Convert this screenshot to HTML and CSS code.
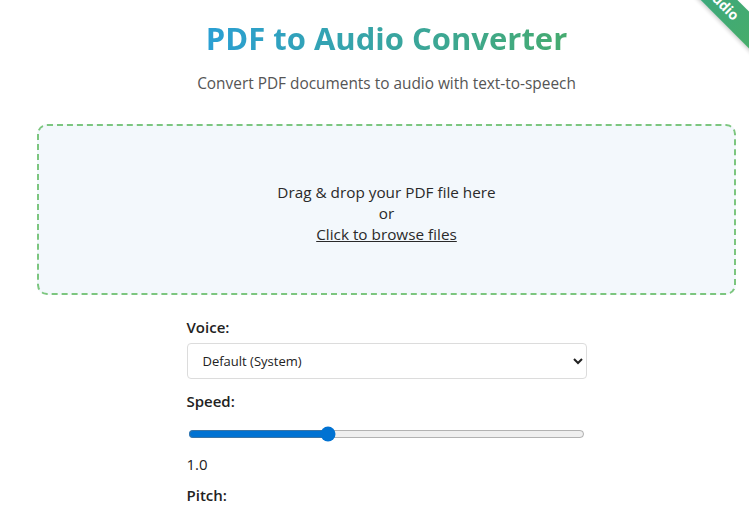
FILE: index.html
```html
<!DOCTYPE html>
<html lang="en">
<head>
<meta charset="utf-8">
<title>PDF to Audio Converter</title>
<link rel="stylesheet" href="styles.css">
</head>
<body>
<div class="ribbon-wrap"><div class="ribbon">PDF to Audio</div></div>
<main class="container">
  <h1 class="title"><span class="title-text">PDF to Audio Converter</span></h1>
  <p class="subtitle">Convert PDF documents to audio with text-to-speech</p>
  <div class="dropzone">
    <p class="dz-line">Drag &amp; drop your PDF file here</p>
    <p class="dz-line">or</p>
    <p class="dz-line"><span class="browse">Click to browse files</span></p>
  </div>
  <div class="controls">
    <label class="field-label" for="voice">Voice:</label>
    <select id="voice" class="select"><option>Default (System)</option></select>
    <label class="field-label" for="speed">Speed:</label>
    <input id="speed" class="range" type="range" min="0.5" max="2" step="0.01" value="1.02">
    <div class="value">1.0</div>
    <label class="field-label" for="pitch">Pitch:</label>
  </div>
</main>
</body>
</html>
```
FILE: styles.css
```css
html, body {
  margin: 0;
  padding: 0;
  background: #ffffff;
}
body {
  font-family: "Open Sans", "Noto Sans", sans-serif;
  color: #222;
  overflow: hidden;
}
.container {
  width: 699px;
  margin-left: 37px;
  position: relative;
}
.title {
  margin: 0;
  padding-top: 16px;
  text-align: center;
  font-size: 31px;
  line-height: 44px;
  font-weight: 700;
}
.title-text {
  background: linear-gradient(90deg, #2a9fd4, #46ab70);
  -webkit-background-clip: text;
  background-clip: text;
  color: transparent;
}
.subtitle {
  margin: 14px 0 0;
  text-align: center;
  font-size: 15.4px;
  line-height: 20px;
  color: #555;
}
.dropzone {
  margin-top: 30px;
  height: 171px;
  box-sizing: border-box;
  padding-top: 7px;
  border: 2px dashed #7cc67f;
  border-radius: 10px;
  background: #f3f8fc;
  display: flex;
  flex-direction: column;
  justify-content: center;
  align-items: center;
  font-size: 15.3px;
  line-height: 21px;
  color: #2a2a2a;
}
.dz-line {
  margin: 0;
}
.browse {
  text-decoration: underline;
  cursor: pointer;
}
.controls {
  width: 400px;
  margin: 22px auto 0;
  display: flex;
  flex-direction: column;
  align-items: stretch;
}
.field-label {
  font-size: 15px;
  font-weight: 600;
  line-height: 21px;
  color: #222;
  margin-bottom: 5px;
}
.select {
  height: 36px;
  border: 1px solid #dcdcdc;
  border-radius: 4px;
  background: #fff;
  padding: 0 11px;
  font-family: inherit;
  font-size: 13px;
  color: #222;
  margin-bottom: 12px;
}
.range {
  margin: 9px 2px 12px 1px;
  accent-color: #0072d2;
}
.value {
  font-size: 15px;
  line-height: 21px;
  margin-bottom: 10px;
}
.ribbon-wrap {
  position: absolute;
  top: 0;
  right: 0;
  width: 150px;
  height: 150px;
  overflow: hidden;
  z-index: 2;
}
.ribbon {
  position: absolute;
  left: -6px;
  top: -29px;
  width: 214px;
  padding-left: 6px;
  height: 26px;
  line-height: 26px;
  text-align: center;
  transform: rotate(45deg);
  background: linear-gradient(90deg, #2a9f9a, #4caf62);
  color: #fff;
  font-weight: 700;
  font-size: 14px;
  box-shadow: 0 2px 4px rgba(0,0,0,0.18);
}
```
